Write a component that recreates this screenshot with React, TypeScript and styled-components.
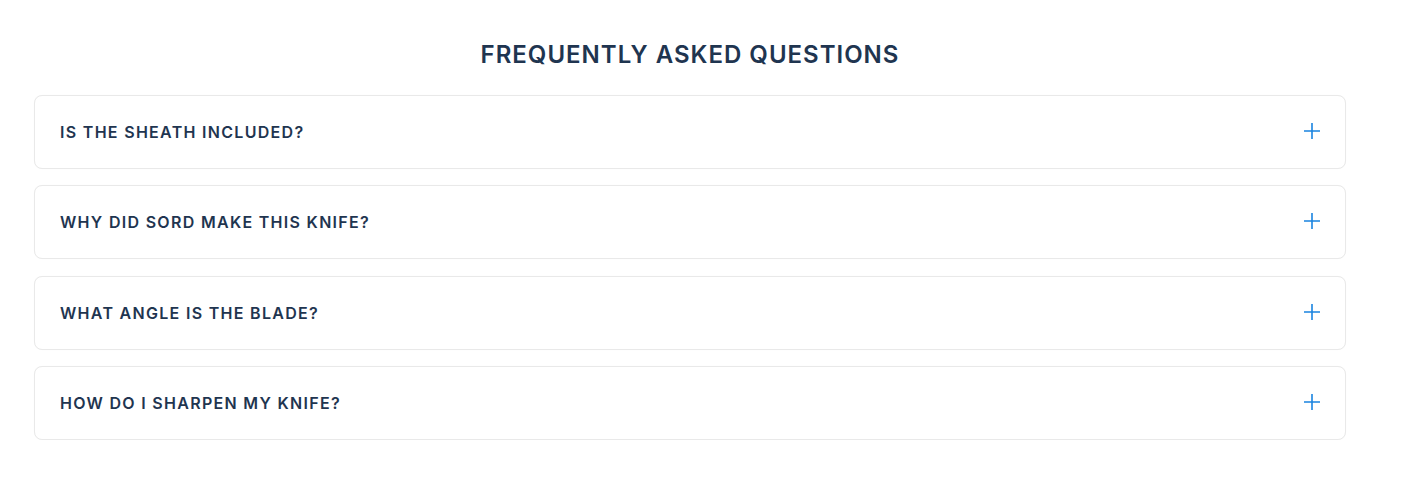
import styled, { createGlobalStyle } from 'styled-components'

const GlobalStyle = createGlobalStyle`
  body {
    margin: 0;
    background: #ffffff;
    font-family: 'Inter', 'Liberation Sans', sans-serif;
  }
`

const Section = styled.section`
  width: 1312px;
  margin-left: 34px;
  padding-top: 39px;
`

const Title = styled.h2`
  margin: 0 0 24px;
  text-align: center;
  font-size: 24px;
  line-height: 32px;
  font-weight: 600;
  letter-spacing: 1px;
  color: #1f3550;
`

const List = styled.div`
  display: flex;
  flex-direction: column;
  gap: 16.3px;
`

const Item = styled.div`
  display: flex;
  align-items: center;
  justify-content: space-between;
  height: 74px;
  box-sizing: border-box;
  padding: 0 25px;
  border: 1px solid #e9e9e9;
  border-radius: 8px;
  box-shadow: 0 0 1px rgba(0, 0, 0, 0.04);
  background: #ffffff;
  cursor: pointer;
`

const Question = styled.span`
  font-size: 16px;
  font-weight: 600;
  letter-spacing: 1.3px;
  color: #1f3550;
`

const Plus = styled.svg`
  width: 16px;
  height: 16px;
  flex-shrink: 0;
  margin-top: -2px;
`

const questions = [
  'IS THE SHEATH INCLUDED?',
  'WHY DID SORD MAKE THIS KNIFE?',
  'WHAT ANGLE IS THE BLADE?',
  'HOW DO I SHARPEN MY KNIFE?',
]

const App = () => {
  return (
    <>
      <GlobalStyle />
      <Section>
        <Title>FREQUENTLY ASKED QUESTIONS</Title>
        <List>
          {questions.map((q) => (
            <Item key={q}>
              <Question>{q}</Question>
              <Plus viewBox="0 0 16 16">
                <path d="M8 0v16M0 8h16" stroke="#1a84e0" strokeWidth="1.6" fill="none" />
              </Plus>
            </Item>
          ))}
        </List>
      </Section>
    </>
  )
}

export default App
